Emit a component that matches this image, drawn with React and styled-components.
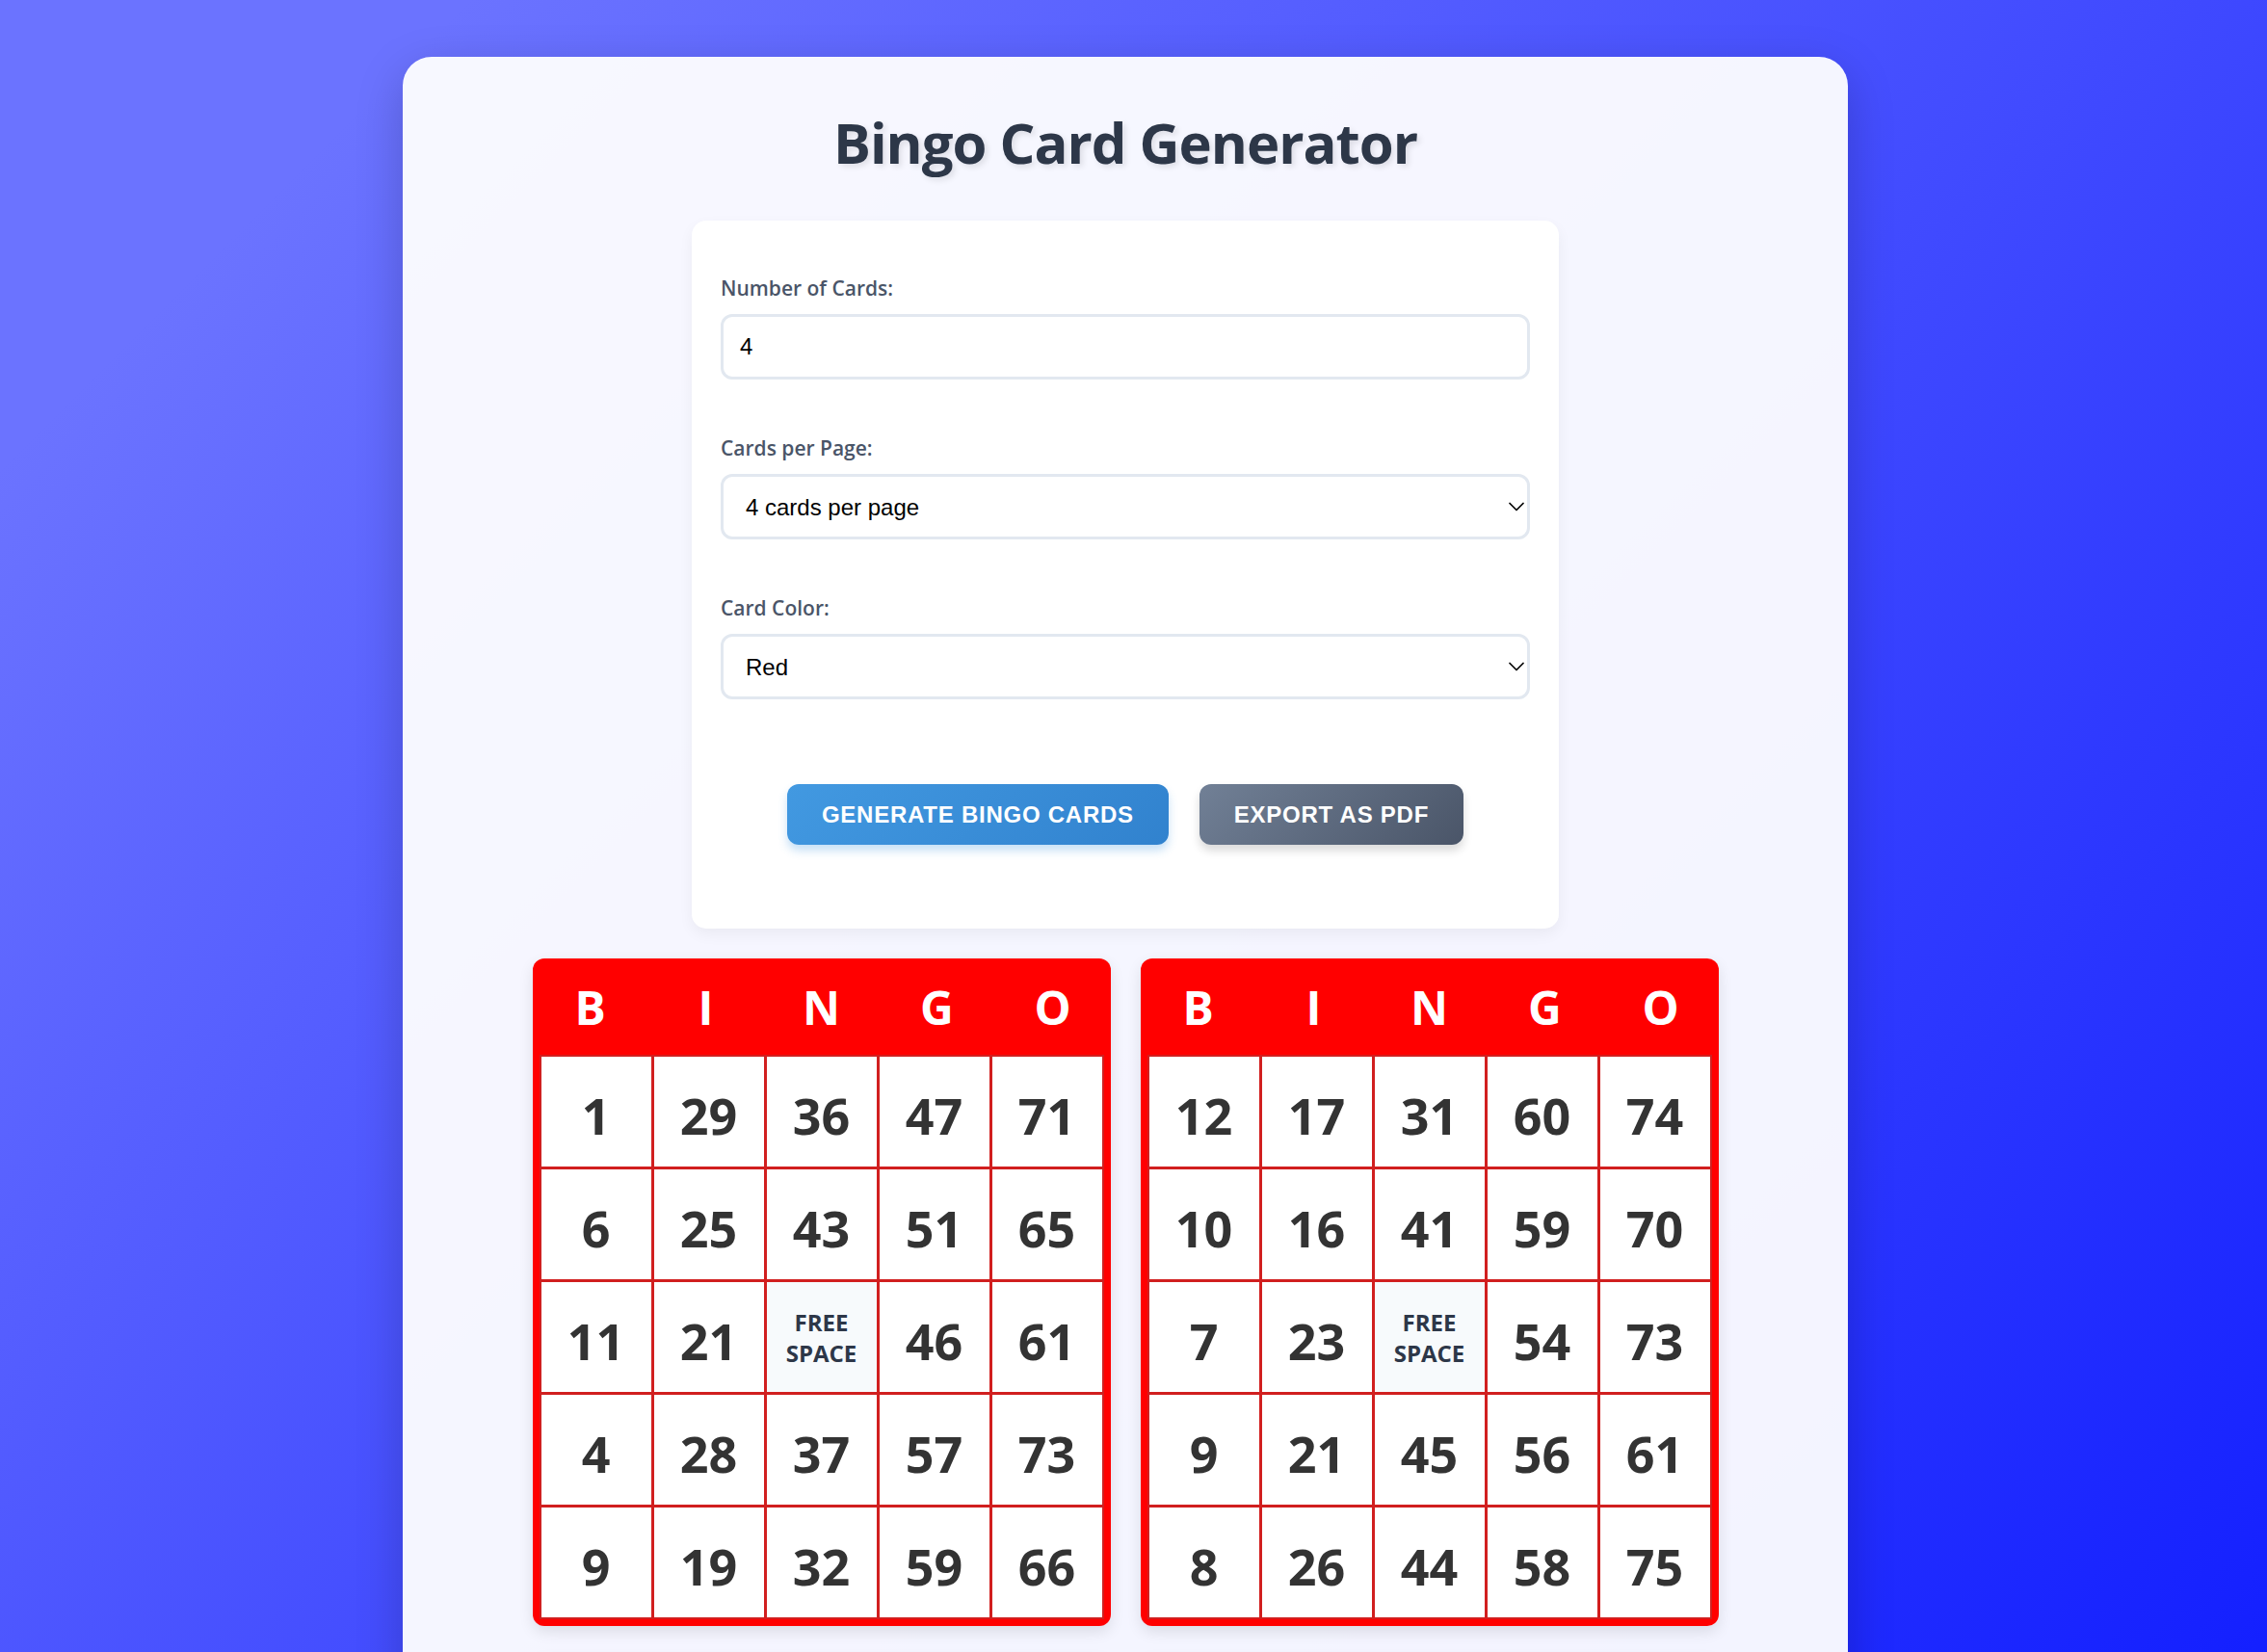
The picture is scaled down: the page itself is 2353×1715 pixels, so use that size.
import React from "react";
import styled, { createGlobalStyle } from "styled-components";
import { ChevronDown } from "lucide-react";

const GlobalStyle = createGlobalStyle`
  html, body {
    margin: 0;
    padding: 0;
  }
  html {
    overflow: hidden;
  }
  body {
    font-family: "Open Sans", "Noto Sans", sans-serif;
  }
  * {
    box-sizing: border-box;
  }
`;

const Page = styled.div`
  min-height: 100vh;
  padding: 59px 17px 60px 0;
  background: linear-gradient(135deg, #6b73ff 10%, #000dff 100%);
`;

const Container = styled.div`
  max-width: 1500px;
  margin: 0 auto;
  padding: 45px;
  background: rgba(255, 255, 255, 0.95);
  border-radius: 30px;
  box-shadow: 0 15px 50px rgba(0, 0, 0, 0.2);
`;

const Title = styled.h1`
  margin: 0 0 40px;
  padding-top: 3px;
  text-align: center;
  font-size: 58px;
  line-height: 82px;
  letter-spacing: -1px;
  font-weight: 700;
  color: #2d3748;
  text-shadow: 3px 3px 6px rgba(0, 0, 0, 0.1);
`;

const Panel = styled.div`
  max-width: 900px;
  margin: 0 auto 31px;
  padding: 57px 30px 87px;
  background: #fff;
  border-radius: 15px;
  box-shadow: 0 6px 15px rgba(0, 0, 0, 0.05);
  display: flex;
  flex-direction: column;
  gap: 58px;
`;

const Group = styled.div``;

const Label = styled.label`
  display: block;
  margin-bottom: 13px;
  font-size: 21px;
  line-height: 27px;
  font-weight: 600;
  color: #4a5568;
`;

const fieldCss = `
  display: block;
  width: 100%;
  height: 68px;
  border: 3px solid #e2e8f0;
  border-radius: 12px;
  background: #fff;
  color: #000;
  font-family: "Liberation Sans", Arial, sans-serif;
  font-size: 24px;
  outline: none;
`;

const Input = styled.input`
  ${fieldCss}
  padding: 0 17px;
`;

const SelectWrap = styled.div`
  position: relative;
`;

const Select = styled.select`
  ${fieldCss}
  appearance: none;
  padding: 0 40px 0 23px;
`;

const Chevron = styled(ChevronDown)`
  position: absolute;
  right: 0;
  top: 50%;
  transform: translateY(-50%);
  pointer-events: none;
  color: #000;
`;

const ButtonRow = styled.div`
  display: flex;
  justify-content: center;
  gap: 32px;
  margin-top: 30px;
`;

const Button = styled.button`
  height: 63px;
  padding: 0 36px;
  border: none;
  border-radius: 12px;
  font-family: "Liberation Sans", Arial, sans-serif;
  font-size: 24px;
  font-weight: 700;
  letter-spacing: 0.75px;
  text-transform: uppercase;
  color: #fff;
  cursor: pointer;
  background: ${(p) =>
    p.$variant === "gray"
      ? "linear-gradient(135deg, #718096 0%, #4a5568 100%)"
      : "linear-gradient(135deg, #4299e1 0%, #3182ce 100%)"};
  box-shadow: ${(p) =>
    p.$variant === "gray"
      ? "0 6px 10px rgba(0, 0, 0, 0.15)"
      : "0 6px 10px rgba(66, 153, 225, 0.3)"};
`;

const CardsGrid = styled.div`
  display: grid;
  grid-template-columns: repeat(2, 600px);
  justify-content: center;
  gap: 31px;
`;

const Card = styled.div`
  background: #ff0000;
  border-radius: 12px;
  overflow: hidden;
  box-shadow: 0 6px 15px rgba(0, 0, 0, 0.1);
`;

const CardHeader = styled.div`
  display: grid;
  grid-template-columns: repeat(5, 1fr);
  align-items: center;
  height: 100px;
  text-align: center;
  color: #fff;
  font-size: 48px;
  font-weight: 700;
`;

const CardBody = styled.div`
  padding: 0 7px 7px;
`;

const NumberGrid = styled.div`
  display: grid;
  grid-template-columns: repeat(5, 114px);
  grid-auto-rows: 114px;
  gap: 3px;
  padding: 2px;
  background: #d11f1f;
`;

const Cell = styled.div`
  display: flex;
  align-items: center;
  justify-content: center;
  text-align: center;
  padding-top: ${(p) => (p.$free ? "2px" : "8px")};
  background: ${(p) => (p.$free ? "#f7fafc" : "#fff")};
  color: ${(p) => (p.$free ? "#2d3748" : "#333")};
  font-size: ${(p) => (p.$free ? "24px" : "52px")};
  line-height: ${(p) => (p.$free ? "32px" : "1")};
  font-weight: 700;
`;

const cards = [
  [
    [1, 29, 36, 47, 71],
    [6, 25, 43, 51, 65],
    [11, 21, null, 46, 61],
    [4, 28, 37, 57, 73],
    [9, 19, 32, 59, 66],
  ],
  [
    [12, 17, 31, 60, 74],
    [10, 16, 41, 59, 70],
    [7, 23, null, 54, 73],
    [9, 21, 45, 56, 61],
    [8, 26, 44, 58, 75],
  ],
  [
    [3, 18, 33, 49, 68],
    [14, 22, 40, 55, 62],
    [5, 27, null, 48, 72],
    [13, 30, 38, 52, 64],
    [2, 24, 35, 46, 69],
  ],
  [
    [15, 20, 42, 53, 67],
    [8, 16, 34, 50, 71],
    [1, 28, null, 60, 63],
    [11, 25, 39, 47, 74],
    [6, 19, 45, 57, 70],
  ],
];

function BingoCard({ rows }) {
  return (
    <Card>
      <CardHeader>
        {"BINGO".split("").map((l) => (
          <span key={l}>{l}</span>
        ))}
      </CardHeader>
      <CardBody>
        <NumberGrid>
          {rows.flat().map((n, i) =>
            n === null ? (
              <Cell key={i} $free>
                FREE
                <br />
                SPACE
              </Cell>
            ) : (
              <Cell key={i}>{n}</Cell>
            )
          )}
        </NumberGrid>
      </CardBody>
    </Card>
  );
}

export default function App() {
  return (
    <>
      <GlobalStyle />
      <Page>
        <Container>
          <Title>Bingo Card Generator</Title>
          <Panel>
            <Group>
              <Label>Number of Cards:</Label>
              <Input type="number" defaultValue={4} min={1} />
            </Group>
            <Group>
              <Label>Cards per Page:</Label>
              <SelectWrap>
                <Select defaultValue="4">
                  <option value="1">1 card per page</option>
                  <option value="2">2 cards per page</option>
                  <option value="4">4 cards per page</option>
                </Select>
                <Chevron size={28} strokeWidth={1.5} />
              </SelectWrap>
            </Group>
            <Group>
              <Label>Card Color:</Label>
              <SelectWrap>
                <Select defaultValue="red">
                  <option value="red">Red</option>
                  <option value="blue">Blue</option>
                  <option value="green">Green</option>
                </Select>
                <Chevron size={28} strokeWidth={1.5} />
              </SelectWrap>
            </Group>
            <ButtonRow>
              <Button>Generate Bingo Cards</Button>
              <Button $variant="gray">Export as PDF</Button>
            </ButtonRow>
          </Panel>
          <CardsGrid>
            {cards.map((rows, i) => (
              <BingoCard key={i} rows={rows} />
            ))}
          </CardsGrid>
        </Container>
      </Page>
    </>
  );
}
